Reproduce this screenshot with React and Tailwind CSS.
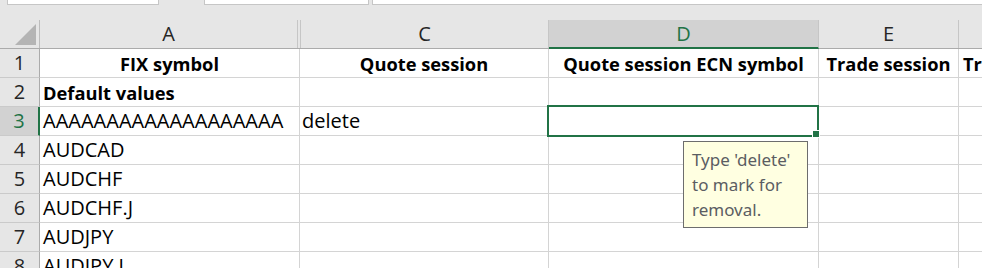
import React from 'react';

const cols = [
  { key: 'A', w: 'w-[260px]' },
  { key: 'C', w: 'w-[249px]' },
  { key: 'D', w: 'w-[270px]' },
  { key: 'E', w: 'w-[140px]' },
];

const rows = [
  { n: 1, bold: true, cells: ['FIX symbol', 'Quote session', 'Quote session ECN symbol', 'Trade session', 'Trade session ECN symbol'], center: true },
  { n: 2, bold: true, cells: ['Default values', '', '', '', ''] },
  { n: 3, cells: ['AAAAAAAAAAAAAAAAAAA', 'delete', '', '', ''], active: true },
  { n: 4, cells: ['AUDCAD', '', '', '', ''] },
  { n: 5, cells: ['AUDCHF', '', '', '', ''] },
  { n: 6, cells: ['AUDCHF.J', '', '', '', ''] },
  { n: 7, cells: ['AUDJPY', '', '', '', ''] },
  { n: 8, cells: ['AUDJPY.J', '', '', '', ''] },
];

const RowHeader = ({ n, active }) => (
  <div
    className={`w-[40px] shrink-0 h-[29px] flex items-center justify-center border-b border-[#cacaca] ${
      active ? 'bg-[#d2d2d2] text-[#217346] border-r-2 border-r-[#217346]' : 'text-[#262626] border-r border-r-[#ababab]'
    }`}
  >
    {n}
  </div>
);

export default function App() {
  return (
    <div
      className="relative w-[982px] h-[268px] overflow-hidden bg-[#e6e6e6] text-[20px] text-black"
      style={{ fontFamily: '"Open Sans", "Noto Sans", sans-serif' }}
    >
      {/* top strip with the ribbon boxes */}
      <div className="h-[20px] flex items-start">
        <div className="ml-[7px] w-[152px] h-[5px] bg-white border-x border-b border-[#c6c6c6]" />
        <div className="ml-[45px] w-[165px] h-[5px] bg-white border-x border-b border-[#c6c6c6]" />
        <div className="ml-[3px] flex-1 h-[5px] bg-white border-l border-b border-[#c6c6c6]" />
      </div>

      {/* column headers */}
      <div className="flex h-[29px] border-b border-[#ababab] leading-[28px]">
        <div className="w-[40px] shrink-0 border-r border-[#bdbdbd] flex items-end justify-end pr-[3px] pb-[3px]">
          <svg width="21" height="21" viewBox="0 0 21 21">
            <polygon points="21,0 21,21 0,21" fill="#b4b4b4" />
          </svg>
        </div>
        <div className="w-[258px] shrink-0 border-r border-[#c6c6c6] text-center text-[#262626]">A</div>
        <div className="w-[2px] shrink-0" />
        <div className="w-[249px] shrink-0 border-l border-r border-[#c6c6c6] text-center text-[#262626]">C</div>
        <div className="w-[270px] shrink-0 border-r border-[#c6c6c6] bg-[#d2d2d2] text-center text-[#217346] border-b-2 border-b-[#217346] -mb-[1px]">
          D
        </div>
        <div className="w-[140px] shrink-0 border-r border-[#c6c6c6] text-center text-[#262626]">E</div>
        <div className="flex-1" />
      </div>

      {/* data rows */}
      {rows.map((r) => (
        <div key={r.n} className="flex leading-[28px]">
          <RowHeader n={r.n} active={r.active} />
          {cols.map((c, i) => (
            <div
              key={c.key}
              className={`${c.w} shrink-0 h-[29px] bg-white border-r border-b border-[#d4d4d4] whitespace-nowrap overflow-visible ${
                r.bold ? 'font-bold text-[18.3px] pt-[1px]' : ''
              } ${r.center ? 'text-center' : i === 0 ? 'pl-[3px]' : 'pl-[2px]'}`}
            >
              {r.cells[i]}
            </div>
          ))}
          <div
            className={`flex-1 h-[29px] bg-white border-b border-[#d4d4d4] whitespace-nowrap overflow-hidden pl-[4px] ${
              r.bold ? 'font-bold text-[18.3px] pt-[1px]' : ''
            }`}
          >
            {r.cells[4]}
          </div>
        </div>
      ))}

      {/* active cell D3 */}
      <div className="absolute left-[547px] top-[105px] w-[272px] h-[32px] border-2 border-[#217346]" />
      <div className="absolute left-[812px] top-[130px] w-[8px] h-[8px] bg-[#217346] border border-white" />

      {/* input message tooltip */}
      <div
        className="absolute left-[683px] top-[141px] w-[125px] h-[87px] bg-[#ffffe1] border border-[#6d6d6d] pl-[8px] pt-[5px] text-[17px] leading-[25px] text-[#5b5d62]"
        style={{ fontFamily: '"Noto Sans", "Open Sans", sans-serif' }}
      >
        <div>Type 'delete'</div>
        <div>to mark for</div>
        <div>removal.</div>
      </div>
    </div>
  );
}
